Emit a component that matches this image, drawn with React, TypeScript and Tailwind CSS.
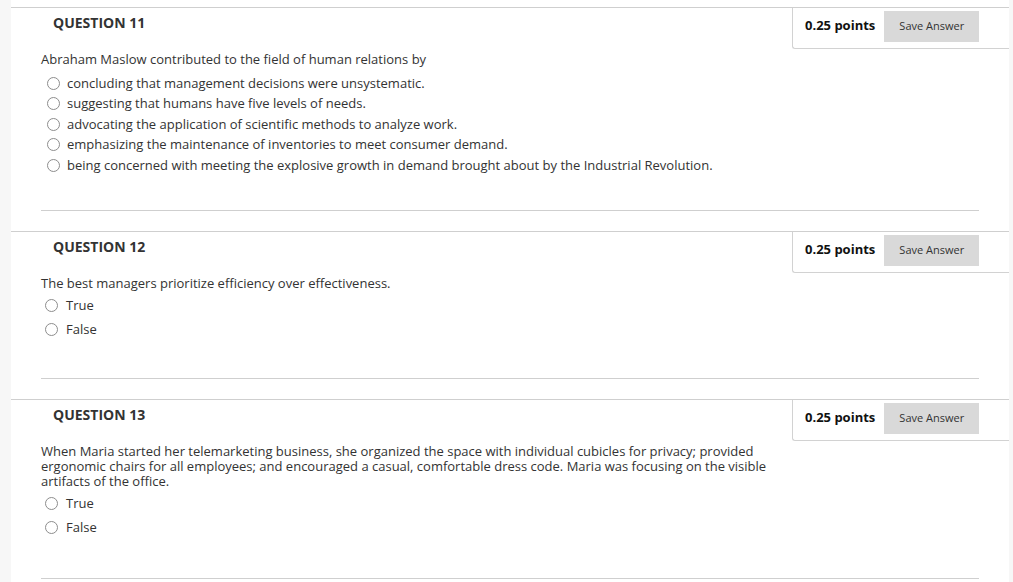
import React from 'react'

type Question = {
  num: number
  text: string
  options: string[]
  rowClass: string
  listClass: string
  radioClass: string
  sepClass: string
}

const questions: Question[] = [
  {
    num: 11,
    text: 'Abraham Maslow contributed to the field of human relations by',
    options: [
      'concluding that management decisions were unsystematic.',
      'suggesting that humans have five levels of needs.',
      'advocating the application of scientific methods to analyze work.',
      'emphasizing the maintenance of inventories to meet consumer demand.',
      'being concerned with meeting the explosive growth in demand brought about by the Industrial Revolution.',
    ],
    rowClass: 'h-[20.5px]',
    listClass: 'mt-[6px] pl-[36px]',
    radioClass: 'mr-[7px]',
    sepClass: 'mt-[34px]',
  },
  {
    num: 12,
    text: 'The best managers prioritize efficiency over effectiveness.',
    options: ['True', 'False'],
    rowClass: 'h-[24px]',
    listClass: 'mt-[3px] pl-[34px]',
    radioClass: 'mr-[8px]',
    sepClass: 'mt-[36px]',
  },
  {
    num: 13,
    text: 'When Maria started her telemarketing business, she organized the space with individual cubicles for privacy; provided ergonomic chairs for all employees; and encouraged a casual, comfortable dress code. Maria was focusing on the visible artifacts of the office.',
    options: ['True', 'False'],
    rowClass: 'h-[24px]',
    listClass: 'mt-[3px] pl-[34px]',
    radioClass: 'mr-[8px]',
    sepClass: 'mt-[38px]',
  },
]

function Radio({ className }: { className: string }) {
  return (
    <span
      className={`inline-block w-[13px] h-[13px] rounded-full border border-[#8d8d8d] bg-white shrink-0 ${className}`}
    />
  )
}

function QuestionBlock({ q }: { q: Question }) {
  return (
    <div className="border-t border-[#cfcfcf]">
      {/* Header */}
      <div className="flex items-start justify-between">
        <h2 className="pl-[42px] pt-[5px] text-[14px] leading-[19px] font-bold text-[#333]">
          QUESTION {q.num}
        </h2>
        <div className="flex items-center w-[217px] pl-[12px] pt-[3px] pb-[6px] border-l border-b border-[#d2d2d2] rounded-bl-[3px]">
          <span className="pb-[3px] text-[13px] font-bold text-[#111] leading-[18px]">0.25 points</span>
          <button className="ml-[9px] w-[95px] h-[31px] bg-[#d9d9d9] text-[11px] text-[#333]">
            Save Answer
          </button>
        </div>
      </div>

      <p className="mt-[3px] pl-[30px] pr-[240px] text-[13px] leading-[15px] text-[#333]">{q.text}</p>

      <ul className={q.listClass}>
        {q.options.map((o) => (
          <li key={o} className={`flex items-center text-[13px] text-[#333] ${q.rowClass}`}>
            <Radio className={q.radioClass} />
            {o}
          </li>
        ))}
      </ul>

      <div className={`mx-[30px] mb-[20px] border-t border-[#cfcfcf] ${q.sepClass}`} />
    </div>
  )
}

export default function App() {
  return (
    <div
      className="flex min-h-screen bg-[#f7f7f7]"
      style={{ fontFamily: '"Open Sans", "Noto Sans", sans-serif' }}
    >
      <div className="w-[11px] shrink-0" />
      <div className="w-[998px] bg-white pt-[7px]">
        {questions.map((q) => (
          <QuestionBlock key={q.num} q={q} />
        ))}
      </div>
    </div>
  )
}
